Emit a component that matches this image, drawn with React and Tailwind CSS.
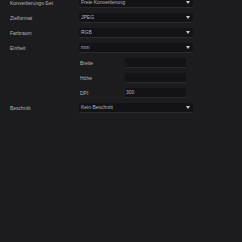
export default function App() {
  const Arrow = () => (
    <svg className="w-[4px] h-[3px] shrink-0" viewBox="0 0 4 3">
      <path d="M0 0h4L2 3z" fill="#c8c8cc" />
    </svg>
  )

  const Select = ({ value }) => (
    <div className="w-[114px] h-[10px] bg-[#131317] border-b border-[#2a2a2f] flex items-center justify-between pl-[2px] pr-[3px]">
      <span>{value}</span>
      <Arrow />
    </div>
  )

  const Field = ({ value }) => (
    <div className="w-[61px] h-[10px] bg-[#131317] border-b border-[#2a2a2f] flex items-center pl-[1px]">
      <span>{value}</span>
    </div>
  )

  const Row = ({ label, children }) => (
    <div className="flex items-center h-[10px]">
      <div className="w-[69px]">{label}</div>
      {children}
    </div>
  )

  const SubRow = ({ label, value }) => (
    <div className="flex items-center h-[10px] pl-[70px]">
      <div className="w-[45px]">{label}</div>
      <Field value={value} />
    </div>
  )

  return (
    <div
      className="w-[242px] h-[242px] overflow-hidden bg-[#1c1c1f] text-[5px] leading-none text-[#b4b4b8]"
      style={{ fontFamily: '"Liberation Sans", Arial, sans-serif' }}
    >
      <div className="-mt-[2px] pl-[10px] flex flex-col gap-[5px]">
        <Row label="Konvertierungs-Set">
          <Select value="Freie Konvertierung" />
        </Row>
        <Row label="Zielformat">
          <Select value="JPEG" />
        </Row>
        <Row label="Farbraum">
          <Select value="RGB" />
        </Row>
        <Row label="Einheit">
          <Select value="mm" />
        </Row>
        <SubRow label="Breite" value="" />
        <SubRow label="Höhe" value="" />
        <SubRow label="DPI" value="300" />
        <Row label="Beschnitt">
          <Select value="Kein Beschnitt" />
        </Row>
      </div>
    </div>
  )
}
